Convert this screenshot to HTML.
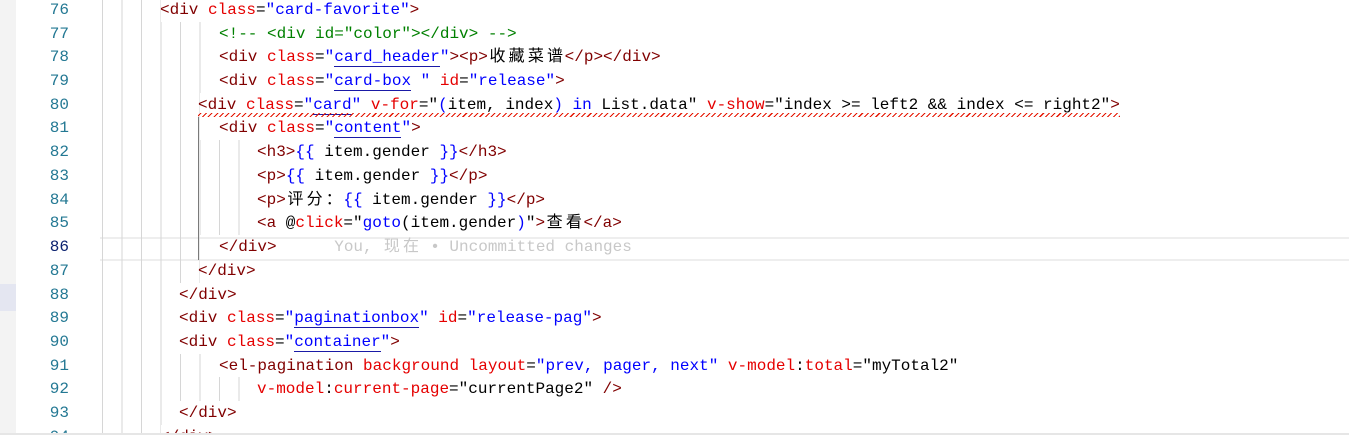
<!DOCTYPE html>
<html><head><meta charset="utf-8"><style>
body{margin:0;width:1349px;height:438px;overflow:hidden;background:#fff;position:relative;font-family:"Liberation Mono","Noto Sans CJK SC",monospace;font-size:16px;}
.strip{position:absolute;left:0;top:0;width:16px;height:438px;background:#f3f3f3}
.mark{position:absolute;left:0;top:284px;width:16px;height:27px;background:#e4e6f1}
.ln{position:absolute;left:16px;width:53px;text-align:right;color:#237893;height:24px;line-height:24px;overflow:hidden}
.row{position:absolute;height:24px;line-height:24px;white-space:pre;color:#000}
.g{position:absolute;left:102px;height:24px;background:repeating-linear-gradient(to right,#d6d6d6 0 1px,transparent 1px 19.5px)}
.t{color:#800000}.a{color:#e50000}.s{color:#0000ff}.c{color:#008000}.b{color:#0000ff}
.u{border-bottom:1.5px solid #1a1aa6;}
.z{display:inline-block;width:19.2px;text-align:center}
.cur{position:absolute;left:100px;right:0;top:237px;height:20px;border-top:2px solid #eee;border-bottom:2px solid #eee}
.sq{position:absolute;left:198px;top:113px;width:922px;height:4px;background:repeating-linear-gradient(135deg,transparent 0 1.5px,#e51400 1.5px 2.6px,transparent 2.6px 4px)}
</style></head><body>
<div class="strip"></div><div class="mark"></div>
<div class="cur"></div>
<div style="position:absolute;left:198px;top:117px;width:1px;height:143px;background:#7a7a7a"></div>

<div class="ln" style="top:-2px">76</div>
<div class="ln" style="top:22px">77</div>
<div class="ln" style="top:45px">78</div>
<div class="ln" style="top:69px">79</div>
<div class="ln" style="top:93px">80</div>
<div class="ln" style="top:116px">81</div>
<div class="ln" style="top:140px">82</div>
<div class="ln" style="top:164px">83</div>
<div class="ln" style="top:188px">84</div>
<div class="ln" style="top:211px">85</div>
<div class="ln" style="top:235px;color:#0b216f">86</div>
<div class="ln" style="top:259px">87</div>
<div class="ln" style="top:283px">88</div>
<div class="ln" style="top:306px">89</div>
<div class="ln" style="top:330px">90</div>
<div class="ln" style="top:354px">91</div>
<div class="ln" style="top:377px">92</div>
<div class="ln" style="top:401px">93</div>
<div class="ln" style="top:425px;height:8px">94</div>

<div class="g" style="top:-2px;width:59px"></div>
<div class="g" style="top:22px;width:117px"></div>
<div class="g" style="top:45px;width:117px"></div>
<div class="g" style="top:69px;width:117px"></div>
<div class="g" style="top:93px;width:98px"></div>
<div class="g" style="top:116px;width:98px"></div>
<div class="g" style="top:140px;width:156px"></div>
<div class="g" style="top:164px;width:156px"></div>
<div class="g" style="top:188px;width:156px"></div>
<div class="g" style="top:211px;width:156px"></div>
<div class="g" style="top:235px;width:98px"></div>
<div class="g" style="top:259px;width:98px"></div>
<div class="g" style="top:283px;width:78px"></div>
<div class="g" style="top:306px;width:78px"></div>
<div class="g" style="top:330px;width:78px"></div>
<div class="g" style="top:354px;width:117px"></div>
<div class="g" style="top:377px;width:156px"></div>
<div class="g" style="top:401px;width:78px"></div>
<div class="g" style="top:425px;width:59px;height:9px"></div>

<div class="row" style="top:-2px;left:160px"><span class="t">&lt;div</span> <span class="a">class</span>=<span class="s">"card-favorite"</span><span class="t">&gt;</span></div>
<div class="row" style="top:22px;left:219px"><span class="c">&lt;!-- &lt;div id="color"&gt;&lt;/div&gt; --&gt;</span></div>
<div class="row" style="top:45px;left:219px"><span class="t">&lt;div</span> <span class="a">class</span>=<span class="s">"<span class="u">card_header</span>"</span><span class="t">&gt;&lt;p&gt;</span><span class="z">收</span><span class="z">藏</span><span class="z">菜</span><span class="z">谱</span><span class="t">&lt;/p&gt;&lt;/div&gt;</span></div>
<div class="row" style="top:69px;left:219px"><span class="t">&lt;div</span> <span class="a">class</span>=<span class="s">"<span class="u">card-box</span> "</span> <span class="a">id</span>=<span class="s">"release"</span><span class="t">&gt;</span></div>
<div class="row" style="top:93px;left:198px"><span class="t">&lt;div</span> <span class="a">class</span>=<span class="s">"<span class="u">card</span>"</span> <span class="a">v-for</span>="<span class="b">(</span>item, index<span class="b">)</span> <span class="b">in</span> List.data" <span class="a">v-show</span>="index &gt;= left2 &amp;&amp; index &lt;= right2"<span class="t">&gt;</span></div>
<div class="sq"></div>
<div class="row" style="top:116px;left:219px"><span class="t">&lt;div</span> <span class="a">class</span>=<span class="s">"<span class="u">content</span>"</span><span class="t">&gt;</span></div>
<div class="row" style="top:140px;left:257px"><span class="t">&lt;h3&gt;</span><span class="b">{{</span> item.gender <span class="b">}}</span><span class="t">&lt;/h3&gt;</span></div>
<div class="row" style="top:164px;left:257px"><span class="t">&lt;p&gt;</span><span class="b">{{</span> item.gender <span class="b">}}</span><span class="t">&lt;/p&gt;</span></div>
<div class="row" style="top:188px;left:257px"><span class="t">&lt;p&gt;</span><span class="z">评</span><span class="z">分</span><span class="z">：</span><span class="b">{{</span> item.gender <span class="b">}}</span><span class="t">&lt;/p&gt;</span></div>
<div class="row" style="top:211px;left:257px"><span class="t">&lt;a</span> @<span class="a">click</span>="<span class="s">goto</span>(item.gender<span class="b">)</span>"<span class="t">&gt;</span><span class="z">查</span><span class="z">看</span><span class="t">&lt;/a&gt;</span></div>
<div class="row" style="top:235px;left:219px"><span class="t">&lt;/div&gt;</span>      <span style="color:#c8c8c8">You, <span class="z">现</span><span class="z">在</span> • Uncommitted changes</span></div>
<div class="row" style="top:259px;left:198px"><span class="t">&lt;/div&gt;</span></div>
<div class="row" style="top:283px;left:179px"><span class="t">&lt;/div&gt;</span></div>
<div class="row" style="top:306px;left:179px"><span class="t">&lt;div</span> <span class="a">class</span>=<span class="s">"<span class="u">paginationbox</span>"</span> <span class="a">id</span>=<span class="s">"release-pag"</span><span class="t">&gt;</span></div>
<div class="row" style="top:330px;left:179px"><span class="t">&lt;div</span> <span class="a">class</span>=<span class="s">"<span class="u">container</span>"</span><span class="t">&gt;</span></div>
<div class="row" style="top:354px;left:219px"><span class="t">&lt;el-pagination</span> <span class="a">background</span> <span class="a">layout</span>=<span class="s">"prev, pager, next"</span> <span class="a">v-model</span>:<span class="a">total</span>="myTotal2"</div>
<div class="row" style="top:377px;left:257px"><span class="a">v-model</span>:<span class="a">current-page</span>="currentPage2" <span class="t">/&gt;</span></div>
<div class="row" style="top:401px;left:179px"><span class="t">&lt;/div&gt;</span></div>
<div class="row" style="top:425px;left:160px;height:8px;overflow:hidden"><span class="t">&lt;/div&gt;</span></div>
<div style="position:absolute;left:0;right:0;top:433px;height:5px;background:#fff;border-top:2px solid #e6e6e6"></div>
</body></html>
